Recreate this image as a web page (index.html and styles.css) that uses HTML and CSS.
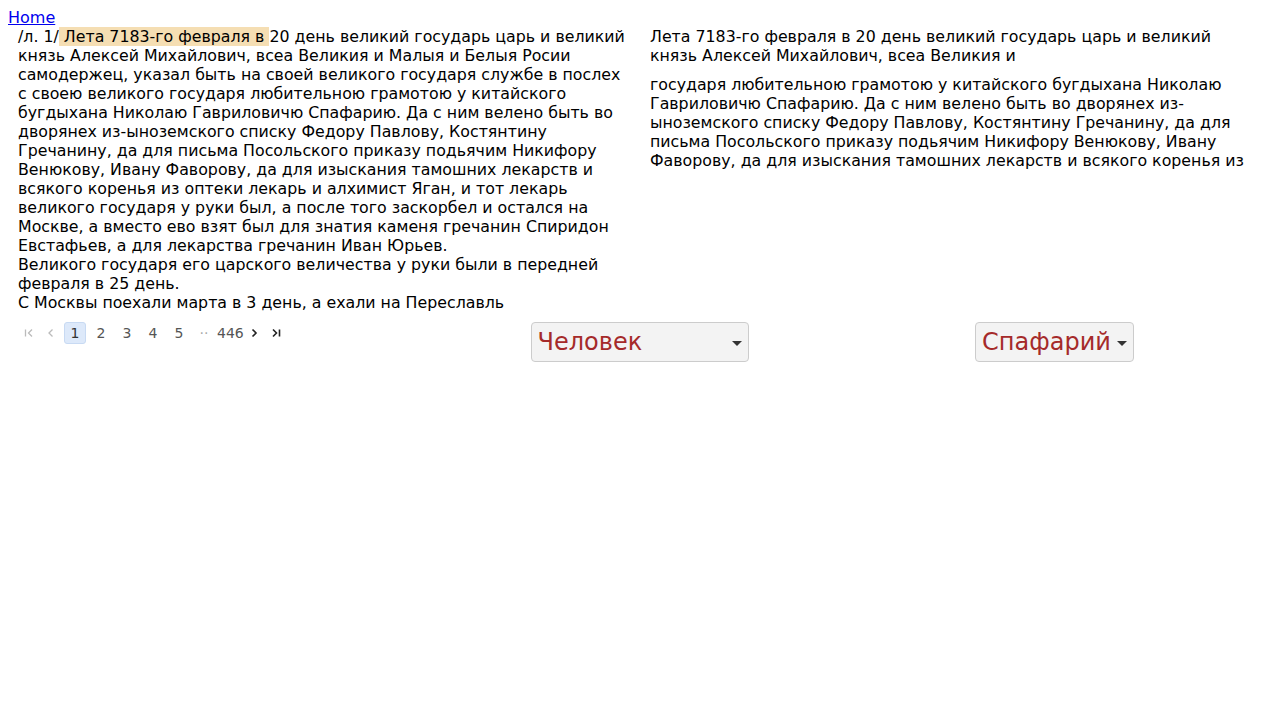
FILE: index.html
```html
<!DOCTYPE html>
<html lang="ru">
<head>
<meta charset="utf-8">
<title>Home</title>
<link rel="stylesheet" href="styles.css">
</head>
<body>
<a class="home" href="#">Home</a>
<div class="columns">
  <div class="col col-left">
    <div class="text">/л. 1/<span class="hl"> Лета 7183-го февраля в </span>20 день великий государь царь и великий князь Алексей Михайлович, всеа Великия и Малыя и Белыя Росии самодержец, указал быть на своей великого государя службе в послех с своею великого государя любительною грамотою у китайского бугдыхана Николаю Гавриловичю Спафарию. Да с ним велено быть во дворянех из-ыноземского списку Федору Павлову, Костянтину Гречанину, да для письма Посольского приказу подьячим Никифору Венюкову, Ивану Фаворову, да для изыскания тамошних лекарств и всякого коренья из оптеки лекарь и алхимист Яган, и тот лекарь великого государя у руки был, а после того заскорбел и остался на Москве, а вместо ево взят был для знатия каменя гречанин Спиридон Евстафьев, а для лекарства гречанин Иван Юрьев.<br>Великого государя его царского величества у руки были в передней февраля в 25 день.<br>С Москвы поехали марта в 3 день, а ехали на Переславль</div>
  </div>
  <div class="col col-right">
    <div class="frag frag-1">Лета 7183-го февраля в 20 день великий государь царь и великий князь Алексей Михайлович, всеа Великия и</div>
    <div class="frag frag-2">государя любительною грамотою у китайского бугдыхана Николаю Гавриловичю Спафарию. Да с ним велено быть во дворянех из-ыноземского списку Федору Павлову, Костянтину Гречанину, да для письма Посольского приказу подьячим Никифору Венюкову, Ивану Фаворову, да для изыскания тамошних лекарств и всякого коренья из</div>
  </div>
</div>
<div class="controls">
  <div class="pager">
    <span class="pg-item icon disabled"><svg width="12" height="12" viewBox="0 0 12 12"><path d="M2.5 2.5v7M9 2.5L5.5 6 9 9.5" fill="none" stroke="currentColor" stroke-width="1.3"/></svg></span>
    <span class="pg-item icon disabled"><svg width="12" height="12" viewBox="0 0 12 12"><path d="M7.5 2.5L4 6l3.5 3.5" fill="none" stroke="currentColor" stroke-width="1.3"/></svg></span>
    <span class="pg-item active">1</span>
    <span class="pg-item">2</span>
    <span class="pg-item">3</span>
    <span class="pg-item">4</span>
    <span class="pg-item">5</span>
    <span class="pg-item dots">··</span>
    <span class="pg-item num-wide">446</span>
    <span class="pg-item icon next"><svg width="12" height="12" viewBox="0 0 12 12"><path d="M4.5 2.5L8 6l-3.5 3.5" fill="none" stroke="currentColor" stroke-width="1.6"/></svg></span>
    <span class="pg-item icon next"><svg width="12" height="12" viewBox="0 0 12 12"><path d="M3 2.5L6.5 6 3 9.5M9.5 2.5v7" fill="none" stroke="currentColor" stroke-width="1.6"/></svg></span>
  </div>
  <div class="cell cell-mid">
    <div class="select select-wide"><span class="sel-text">Человек</span><span class="caret"></span></div>
  </div>
  <div class="cell cell-right">
    <div class="select"><span class="sel-text">Спафарий</span><span class="caret"></span></div>
  </div>
</div>
</body>
</html>
```

FILE: styles.css
```css
html, body {
  margin: 0;
  padding: 0;
  background: #fff;
}
body {
  margin: 8px;
  font-family: "DejaVu Sans", sans-serif;
  font-size: 16px;
  color: #000;
}
.home {
  color: #0000ee;
  text-decoration: underline;
  display: block;
  line-height: 19px;
  width: max-content;
}
.columns {
  display: flex;
  font-size: 15.8px;
}
.col {
  flex: 1 1 0;
  padding: 0 10px;
  line-height: 19px;
}
.hl {
  background: #f5deb3;
}
.frag-2 {
  margin-top: 10px;
}
.controls {
  display: grid;
  grid-template-columns: 421px 421px 422px;
  align-items: start;
  margin-top: 10px;
}
.pager {
  display: flex;
  align-items: center;
  padding-left: 12px;
  font-size: 14px;
  color: #555;
}
.pg-item {
  height: 22px;
  min-width: 22px;
  display: flex;
  align-items: center;
  justify-content: center;
  margin-right: 4px;
  box-sizing: border-box;
  line-height: 22px;
}
.pg-item.icon {
  min-width: 18px;
  margin-right: 4px;
}
.pg-item.disabled {
  color: #bbb;
}
.pg-item.next {
  color: #222;
}
.pg-item.active {
  background: #dde9fa;
  border: 1px solid #c8daf3;
  border-radius: 3px;
  color: #333;
}
.pg-item.dots {
  color: #aaa;
  min-width: 20px;
  margin-right: 3px;
}
.pg-item.num-wide {
  min-width: 0;
  margin-right: 1px;
}
.cell {
  display: flex;
}
.cell-mid {
  justify-content: center;
}
.cell-right {
  justify-content: center;
  margin-right: 13px;
}
.select {
  height: 40px;
  box-sizing: border-box;
  display: inline-flex;
  align-items: center;
  background: #f3f3f3;
  border: 1px solid #ccc;
  border-radius: 4px;
  padding: 0 6px 0 6px;
  font-size: 24px;
  color: #a52a2a;
}
.select-wide {
  width: 218px;
  justify-content: space-between;
}
.sel-text {
  line-height: 28px;
}
.caret {
  width: 0;
  height: 0;
  border-left: 5px solid transparent;
  border-right: 5px solid transparent;
  border-top: 5px solid #333;
  margin-left: 6px;
  margin-top: 3px;
}
```
